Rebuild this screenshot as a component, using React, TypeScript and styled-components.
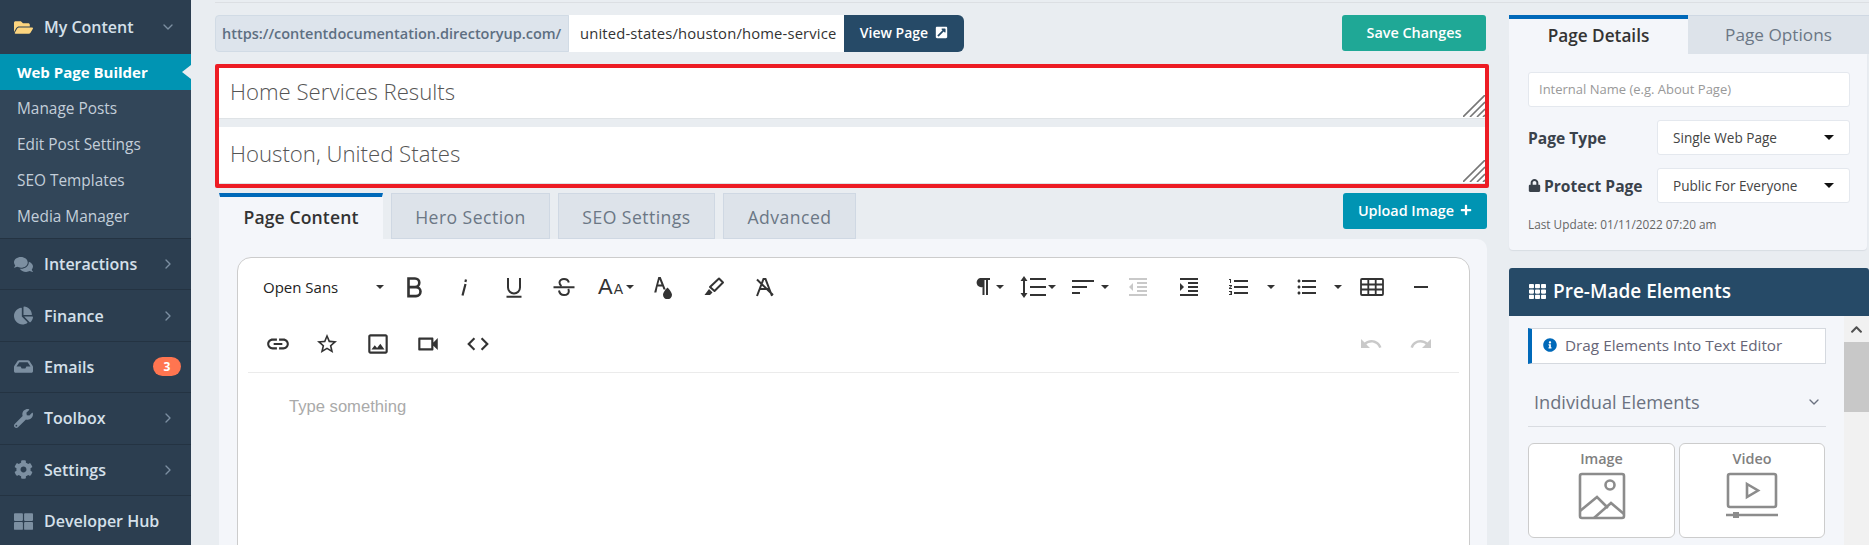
import React from 'react';
import styled, { createGlobalStyle } from 'styled-components';
import {
    FaFolderOpen,
    FaComments,
    FaChartPie,
    FaInbox,
    FaWrench,
    FaCog,
    FaThLarge,
    FaExternalLinkSquareAlt,
    FaPlus,
    FaLock,
    FaTh,
    FaInfoCircle,
    FaChevronUp
} from 'react-icons/fa';
import {
    MdFormatIndentDecrease,
    MdFormatIndentIncrease,
    MdFormatListNumbered,
    MdFormatListBulleted,
    MdRemove,
    MdLink,
    MdStarBorder,
    MdOutlineImage,
    MdOutlineVideocam,
    MdCode,
    MdUndo,
    MdRedo
} from 'react-icons/md';
import { ChevronRight, ChevronDown } from 'lucide-react';

const FONT = `'Open Sans', 'Noto Sans', sans-serif`;

const GlobalStyle = createGlobalStyle`
    html, body {
        margin: 0;
        padding: 0;
        height: 100%;
        overflow: hidden;
        background: #e9edf1;
        font-family: ${FONT};
    }
    * {
        box-sizing: border-box;
    }
`;

const Page = styled.div`
    display: flex;
    height: 545px;
    overflow: hidden;
`;

const Sidebar = styled.nav`
    width: 191px;
    flex: none;
    background: #2c3e50;
    color: #d5e0ea;
`;

const MenuRow = styled.div<{ $first?: boolean }>`
    display: flex;
    align-items: center;
    height: ${p => (p.$first ? '54px' : '51.4px')};
    padding: 0 12px 0 13px;
    border-top: ${p => (p.$first ? '0' : '1px solid #243342')};
    font-size: 16px;
    font-weight: 600;
`;

const MenuIcon = styled.span<{ $yellow?: boolean }>`
    display: flex;
    justify-content: center;
    width: 20px;
    margin-right: 11px;
    font-size: 19px;
    color: ${p => (p.$yellow ? '#fdd57f' : '#7c8fa1')};
`;

const MenuLabel = styled.span`
    flex: 1;
`;

const MenuArrow = styled.span`
    display: flex;
    margin-right: 3px;
    color: #7c8fa1;
`;

const Badge = styled.span`
    width: 28px;
    height: 19px;
    margin-right: -2px;
    border-radius: 10px;
    background: #ff7550;
    color: #fff;
    font-size: 12px;
    font-weight: 700;
    line-height: 19px;
    text-align: center;
`;

const SubMenu = styled.div`
    height: 184px;
    padding-bottom: 4px;
    background: #324659;
`;

const SubItem = styled.div<{ $active?: boolean }>`
    position: relative;
    height: 36px;
    padding-left: 17px;
    background: ${p => (p.$active ? '#0094b3' : 'transparent')};
    color: ${p => (p.$active ? '#fff' : '#c3ced9')};
    font-size: ${p => (p.$active ? '15px' : '15.4px')};
    font-weight: ${p => (p.$active ? 700 : 500)};
    line-height: ${p => (p.$active ? '36px' : '38px')};

    ${p =>
        p.$active &&
        `&:after {
            content: '';
            position: absolute;
            right: 0;
            top: 11px;
            border: 7px solid transparent;
            border-right: 9px solid #e9edf1;
            border-left: 0;
        }`}
`;

const Workspace = styled.div`
    flex: 1;
    min-width: 0;
    margin-left: 24px;
    padding-top: 2px;
`;

const Columns = styled.div`
    display: flex;
    gap: 20px;
    border-top: 1px solid #dcdfe3;
    padding-top: 12px;
`;

const EditorColumn = styled.main`
    width: 1274px;
    flex: none;
`;

const UrlRow = styled.div`
    display: flex;
    align-items: stretch;
    height: 37px;
`;

const UrlPrefix = styled.div`
    display: flex;
    align-items: center;
    width: 354px;
    padding-left: 6px;
    background: #dde4ec;
    border: 1px solid #d1dbe5;
    border-radius: 4px 0 0 4px;
    color: #5d6f82;
    font-size: 14.5px;
    font-weight: 600;
    white-space: nowrap;
`;

const UrlSlug = styled.div`
    width: 275px;
    padding: 0 8px 0 11px;
    background: #fff;
`;

const SlugText = styled.div`
    overflow: hidden;
    color: #333;
    font-size: 14.8px;
    letter-spacing: 0.15px;
    line-height: 36px;
    white-space: nowrap;
`;

const ViewButton = styled.div`
    display: flex;
    align-items: center;
    justify-content: center;
    gap: 7px;
    width: 120px;
    padding-bottom: 2px;
    background: #264a67;
    border-radius: 0 6px 6px 0;
    color: #fff;
    font-size: 14px;
    font-weight: 600;
`;

const ActionButton = styled.div<{ $color: string }>`
    display: flex;
    align-items: center;
    justify-content: center;
    gap: 6px;
    width: 144px;
    height: 36px;
    padding-bottom: 2px;
    background: ${p => p.$color};
    border-radius: 3px;
    color: #fff;
    font-size: 14.4px;
    font-weight: 600;
`;

const SaveSlot = styled.div`
    margin-left: auto;
    margin-right: 3px;
`;

const TitleBox = styled.div`
    display: flex;
    flex-direction: column;
    gap: 8px;
    height: 124px;
    margin-top: 12px;
    border: 4px solid #ed1c24;
    border-radius: 2px;
`;

const TitleField = styled.div<{ $h: number }>`
    position: relative;
    height: ${p => p.$h}px;
    padding-left: 11px;
    background: #fff;
    border-bottom: 1px solid #dfe3e6;
    color: #555;
    font-size: 22.2px;
    font-weight: 300;
    line-height: ${p => p.$h - 4}px;
`;

const Hatch = styled.svg`
    position: absolute;
    right: 0;
    bottom: 1px;
`;

const TabRow = styled.div`
    display: flex;
    align-items: flex-start;
    gap: 8px;
    height: 46px;
    margin-top: 5px;
    padding: 0 2px 0 4px;
`;

const Tab = styled.div<{ $active?: boolean; $w: number }>`
    width: ${p => p.$w}px;
    height: 46px;
    background: ${p => (p.$active ? '#f4f6fa' : '#dde3ea')};
    border: 1px solid ${p => (p.$active ? '#f4f6fa' : '#cfd8e3')};
    border-top: ${p => (p.$active ? '4px solid #0069b9' : '1px solid #cfd8e3')};
    color: ${p => (p.$active ? '#333' : '#6b7785')};
    font-size: 17.6px;
    font-weight: ${p => (p.$active ? 600 : 500)};
    letter-spacing: ${p => (p.$active ? '0.1px' : '0.45px')};
    line-height: ${p => (p.$active ? '40px' : '46px')};
    text-align: center;
`;

const UploadSlot = styled.div`
    margin-left: auto;
`;

const ContentPanel = styled.section`
    margin: 0 2px 0 4px;
    height: 310px;
    padding: 18px 17px 0 18px;
    background: #f4f6fa;
    border-radius: 0 10px 0 0;
`;

const Editor = styled.div`
    height: 300px;
    padding: 1px 10px 0;
    background: #fff;
    border: 1px solid #ccc;
    border-radius: 14px 14px 0 0;
`;

const Toolbar = styled.div`
    display: flex;
    align-items: center;
    height: 57px;
    padding: 0 4px;
    color: #333;
`;

const RowBottom = styled(Toolbar)`
    border-bottom: 1px solid #ebebeb;
    padding-right: 13px;
`;

const RowTop = styled(Toolbar)`
    padding-right: 13px;
    padding-bottom: 2px;
`;

const FontSelect = styled.div`
    display: flex;
    align-items: center;
    justify-content: space-between;
    width: 137px;
    padding: 0 5px 0 11px;
    color: #222;
    font-size: 15px;
`;

const ToolButton = styled.div<{ $w?: number; $pad?: number; $off?: boolean }>`
    display: flex;
    align-items: center;
    width: ${p => p.$w ?? 50}px;
    padding-left: ${p => p.$pad ?? 13}px;
    color: ${p => (p.$off ? '#c9c9c9' : '#333')};
`;

const Caret = styled.span<{ $gap?: number }>`
    width: 0;
    height: 0;
    margin-left: ${p => p.$gap ?? 0}px;
    border: 4px solid transparent;
    border-top: 4px solid #333;
    border-bottom: 0;
`;

const SizeGlyph = styled.span`
    display: flex;
    align-items: baseline;
    width: 26px;
    font-family: 'Liberation Sans', sans-serif;
    font-size: 22px;
    line-height: 1;
    small {
        font-size: 14px;
        margin-left: 1px;
    }
`;

const Spacer = styled.div`
    flex: 1;
`;

const Placeholder = styled.div`
    padding: 24px 0 0 41px;
    color: #aaa;
    font-family: 'Liberation Sans', Arial, sans-serif;
    font-size: 16.6px;
`;

const SideColumn = styled.aside`
    flex: none;
    width: 360px;
`;

const SideTabs = styled.div`
    display: flex;
    height: 39px;
`;

const SideTab = styled.div<{ $active?: boolean }>`
    width: ${p => (p.$active ? '179px' : '181px')};
    background: ${p => (p.$active ? '#f4f6fa' : '#dde3ea')};
    border-top: ${p => (p.$active ? '4px solid #0069b9' : '1px solid #cfd8e3')};
    color: ${p => (p.$active ? '#333' : '#6b7785')};
    font-size: 17.2px;
    font-weight: ${p => (p.$active ? 600 : 500)};
    line-height: ${p => (p.$active ? '34px' : '38px')};
    text-align: center;
`;

const DetailsCard = styled.section`
    height: 196px;
    width: 358px;
    padding: 18px 17px 0 19px;
    background: #f4f6fa;
    border-radius: 0 0 4px 4px;
    box-shadow: 0 1px 1px #d8dde3;
`;

const TextField = styled.div`
    height: 35px;
    padding-left: 10px;
    background: #fff;
    border: 1px solid #e4e8ee;
    border-radius: 3px;
    color: #999;
    font-size: 13px;
    line-height: 33px;
`;

const FieldRow = styled.div`
    display: flex;
    align-items: center;
    justify-content: space-between;
    height: 35px;
    margin-top: 13px;
`;

const FieldLabel = styled.div`
    display: flex;
    align-items: center;
    gap: 3px;
    color: #3a424b;
    font-size: 15.6px;
    font-weight: 700;
`;

const SelectBox = styled.div`
    display: flex;
    align-items: center;
    justify-content: space-between;
    width: 193px;
    height: 35px;
    padding: 0 15px;
    background: #fff;
    border: 1px solid #e4e8ee;
    border-radius: 3px;
    color: #444;
    font-size: 13.6px;
    font-weight: 500;
`;

const SelectCaret = styled.span`
    width: 0;
    height: 0;
    border: 5px solid transparent;
    border-top: 5px solid #111;
    border-bottom: 0;
`;

const LastUpdate = styled.div`
    margin-top: 13px;
    color: #666;
    font-size: 11.8px;
`;

const ElementsHeader = styled.div`
    display: flex;
    align-items: center;
    gap: 7px;
    height: 48px;
    margin-top: 18px;
    padding: 0 0 2px 20px;
    background: #264a67;
    border-radius: 3px 3px 0 0;
    color: #fff;
    font-size: 19px;
    font-weight: 600;
`;

const ElementsBody = styled.div`
    display: flex;
    height: 229px;
    background: #f4f6fa;
`;

const ElementsList = styled.div`
    width: 335px;
    padding: 12px 18px 0 19px;
`;

const Notice = styled.div`
    display: flex;
    align-items: center;
    gap: 8px;
    width: 298px;
    height: 36px;
    padding: 0 0 2px 11px;
    background: #fff;
    border: 1px solid #d5d9df;
    border-left: 4px solid #0069b9;
    color: #667;
    font-size: 15.3px;
    svg {
        color: #0069b9;
    }
`;

const GroupHeader = styled.div`
    display: flex;
    align-items: center;
    justify-content: space-between;
    width: 298px;
    height: 63px;
    padding: 13px 4px 0 6px;
    border-bottom: 1px solid #d9dce1;
    color: #6b7280;
    font-size: 18.2px;
    font-weight: 500;
`;

const ElementGrid = styled.div`
    display: grid;
    grid-template-columns: 147px 146px;
    gap: 4px;
    margin-top: 16px;
`;

const ElementCard = styled.div`
    display: flex;
    flex-direction: column;
    align-items: center;
    height: 95px;
    padding-top: 5px;
    background: #fff;
    border: 1px solid #ccc;
    border-radius: 6px;
    color: #808080;
    font-size: 14.4px;
    font-weight: 600;
`;

const ElementArt = styled.svg`
    margin-top: 4px;
    color: #8c8c8c;
`;

const ScrollTrack = styled.div`
    width: 25px;
    background: #f1f1f1;
    color: #505050;
`;

const ScrollUp = styled.div`
    display: flex;
    justify-content: center;
    align-items: center;
    height: 26px;
`;

const ScrollThumb = styled.div`
    height: 70px;
    background: #c8c8c8;
`;

const HatchMark = () => (
    <Hatch width="22" height="22" viewBox="0 0 22 22">
        <path d="M0 22 22 0M7 22 22 7M14 22 22 14M20 22 22 20" stroke="#777" strokeWidth="1.6" fill="none" />
    </Hatch>
);

// froala toolbar icons, the material set draws these too heavy or not at all
const strokeIcon = (d: string, width = 24, height = 24, sw = 2) => () => (
    <svg width={width} height={height} viewBox={`0 0 ${width} ${height}`} fill="none" stroke="currentColor" strokeWidth={sw}>
        <path d={d} />
    </svg>
);

const BoldIcon = strokeIcon('M6.500 3.500h6.500a4.300 4.300 0 0 1 0 8.600H6.500zM6.500 12.100h7.500a4.500 4.500 0 0 1 0 9H6.500z', 24, 24, 2.600);
const ItalicIcon = strokeIcon('M13.500 9 10.500 20.500M14 4.500 13.400 7', 24, 24, 2.200);
const UnderlineIcon = strokeIcon('M6 3v9.500a6 6 0 0 0 12 0V3M4.500 21.800h15', 24, 24, 2);
const StrikeIcon = strokeIcon(
    'M16.800 7.500C16.300 5.200 14.300 4 12 4 9.500 4 7.500 5.400 7.500 7.500c0 1.400.6 2.600 2 3.500M7 15.500C7.500 18.500 9.500 20 12 20c2.800 0 4.800-1.500 4.800-3.800 0-.8-.2-1.500-.6-2.200M1.500 12.300h21',
    24,
    24,
    2
);

const ParagraphIcon = () => (
    <svg width="18" height="22" viewBox="0 0 18 22" fill="currentColor">
        <path d="M7 2h10v2h-2v15h-2V4h-1.500v15h-2v-8a4.500 4.500 0 0 1-2.500-9z" />
    </svg>
);

const LineHeightIcon = () => (
    <svg width="27" height="24" viewBox="0 0 27 24" fill="currentColor">
        <path d="M4 1 7.500 6H5v12h2.500L4 23 .5 18H3V6H.5zM10 3h16v2H10zM10 11h16v2H10zM10 19h16v2H10z" />
    </svg>
);

const AlignIcon = () => (
    <svg width="24" height="18" viewBox="0 0 24 18" fill="currentColor">
        <path d="M1 2h22v2H1zM1 8h15v2H1zM1 14h8v2H1z" />
    </svg>
);

const FillIcon = () => (
    <svg width="22" height="24" viewBox="0 0 22 24" fill="currentColor">
        <path d="M6.300 2h2.400l5 12.500h-2.200l-1.100-3H5.600l-1.200 6H2.200zm-.1 7.500h3.300L7.500 4.500z" />
        <path d="M15.500 12.500s4.500 4.600 4.500 7.200a4.500 4.500 0 0 1-9 0c0-2.600 4.500-7.200 4.500-7.200z" />
    </svg>
);

const BrushIcon = () => (
    <svg width="24" height="24" viewBox="0 0 24 24" fill="none" stroke="currentColor">
        <path d="M8 12 17 3.500l4 4-8.500 8.500z" strokeWidth="2" strokeLinejoin="round" />
        <path d="M7 14l3.500 3.500L8 20H2.500z" fill="currentColor" stroke="none" />
    </svg>
);

const ClearIcon = () => (
    <svg width="24" height="24" viewBox="0 0 24 24" fill="none" stroke="currentColor" strokeWidth="2">
        <path d="M5 21 11.500 4h2L20 21M8 14h9M5 4.500 21 20" />
    </svg>
);

const TableIcon = () => (
    <svg width="24" height="20" viewBox="0 0 24 20" fill="none" stroke="currentColor" strokeWidth="1.800">
        <rect x="1" y="2" width="22" height="16" rx="1" />
        <path d="M1 7.500h22M1 12.500h22M8.300 2v16M15.700 2v16" />
    </svg>
);

const ImageArt = () => (
    <ElementArt width="48" height="48" viewBox="0 0 48 48" fill="none" stroke="currentColor" strokeWidth="2.600">
        <rect x="2" y="2" width="44" height="44" rx="2" />
        <circle cx="32" cy="13" r="4.500" />
        <path d="M2 39 19 25l11 11M16 46l17-15 13 11" />
    </ElementArt>
);

const VideoArt = () => (
    <ElementArt width="52" height="48" viewBox="0 0 52 48" fill="none" stroke="currentColor" strokeWidth="2.600">
        <rect x="2" y="2" width="48" height="33" rx="2" />
        <path d="M21 12l11 6.500-11 6.500z" />
        <path d="M0 43h52" />
        <rect x="7" y="40" width="6" height="6" fill="currentColor" stroke="none" />
    </ElementArt>
);

const App = () => {
    return (
        <Page>
            <GlobalStyle />
            <Sidebar>
                <MenuRow $first>
                    <MenuIcon $yellow>
                        <FaFolderOpen />
                    </MenuIcon>
                    <MenuLabel>My Content</MenuLabel>
                    <MenuArrow>
                        <ChevronDown size={16} />
                    </MenuArrow>
                </MenuRow>
                <SubMenu>
                    <SubItem $active>Web Page Builder</SubItem>
                    <SubItem>Manage Posts</SubItem>
                    <SubItem>Edit Post Settings</SubItem>
                    <SubItem>SEO Templates</SubItem>
                    <SubItem>Media Manager</SubItem>
                </SubMenu>
                <MenuRow>
                    <MenuIcon>
                        <FaComments />
                    </MenuIcon>
                    <MenuLabel>Interactions</MenuLabel>
                    <MenuArrow>
                        <ChevronRight size={16} />
                    </MenuArrow>
                </MenuRow>
                <MenuRow>
                    <MenuIcon>
                        <FaChartPie />
                    </MenuIcon>
                    <MenuLabel>Finance</MenuLabel>
                    <MenuArrow>
                        <ChevronRight size={16} />
                    </MenuArrow>
                </MenuRow>
                <MenuRow>
                    <MenuIcon>
                        <FaInbox />
                    </MenuIcon>
                    <MenuLabel>Emails</MenuLabel>
                    <Badge>3</Badge>
                </MenuRow>
                <MenuRow>
                    <MenuIcon>
                        <FaWrench />
                    </MenuIcon>
                    <MenuLabel>Toolbox</MenuLabel>
                    <MenuArrow>
                        <ChevronRight size={16} />
                    </MenuArrow>
                </MenuRow>
                <MenuRow>
                    <MenuIcon>
                        <FaCog />
                    </MenuIcon>
                    <MenuLabel>Settings</MenuLabel>
                    <MenuArrow>
                        <ChevronRight size={16} />
                    </MenuArrow>
                </MenuRow>
                <MenuRow>
                    <MenuIcon>
                        <FaThLarge />
                    </MenuIcon>
                    <MenuLabel>Developer Hub</MenuLabel>
                </MenuRow>
            </Sidebar>

            <Workspace>
                <Columns>
                    <EditorColumn>
                        <UrlRow>
                            <UrlPrefix>https://contentdocumentation.directoryup.com/</UrlPrefix>
                            <UrlSlug>
                                <SlugText>united-states/houston/home-services</SlugText>
                            </UrlSlug>
                            <ViewButton>
                                View Page <FaExternalLinkSquareAlt size={13} />
                            </ViewButton>
                            <SaveSlot>
                                <ActionButton $color="#1fa896">Save Changes</ActionButton>
                            </SaveSlot>
                        </UrlRow>

                        <TitleBox>
                            <TitleField $h={51}>
                                Home Services Results
                                <HatchMark />
                            </TitleField>
                            <TitleField $h={57}>
                                Houston, United States
                                <HatchMark />
                            </TitleField>
                        </TitleBox>

                        <TabRow>
                            <Tab $active $w={164}>
                                Page Content
                            </Tab>
                            <Tab $w={159}>Hero Section</Tab>
                            <Tab $w={157}>SEO Settings</Tab>
                            <Tab $w={133}>Advanced</Tab>
                            <UploadSlot>
                                <ActionButton $color="#0094b3">
                                    Upload Image <FaPlus size={12} />
                                </ActionButton>
                            </UploadSlot>
                        </TabRow>

                        <ContentPanel>
                            <Editor>
                                <RowTop>
                                    <FontSelect>
                                        Open Sans <Caret />
                                    </FontSelect>
                                    <ToolButton>
                                        <BoldIcon />
                                    </ToolButton>
                                    <ToolButton>
                                        <ItalicIcon />
                                    </ToolButton>
                                    <ToolButton>
                                        <UnderlineIcon />
                                    </ToolButton>
                                    <ToolButton>
                                        <StrikeIcon />
                                    </ToolButton>
                                    <ToolButton $w={50} $pad={9}>
                                        <SizeGlyph>
                                            A<small>A</small>
                                        </SizeGlyph>
                                        <Caret $gap={2} />
                                    </ToolButton>
                                    <ToolButton>
                                        <FillIcon />
                                    </ToolButton>
                                    <ToolButton>
                                        <BrushIcon />
                                    </ToolButton>
                                    <ToolButton>
                                        <ClearIcon />
                                    </ToolButton>
                                    <Spacer />
                                    <ToolButton $pad={10}>
                                        <ParagraphIcon />
                                        <Caret $gap={5} />
                                    </ToolButton>
                                    <ToolButton $pad={7}>
                                        <LineHeightIcon />
                                        <Caret $gap={1} />
                                    </ToolButton>
                                    <ToolButton $pad={8}>
                                        <AlignIcon />
                                        <Caret $gap={6} />
                                    </ToolButton>
                                    <ToolButton $off $w={51}>
                                        <MdFormatIndentDecrease size={24} />
                                    </ToolButton>
                                    <ToolButton>
                                        <MdFormatIndentIncrease size={24} />
                                    </ToolButton>
                                    <ToolButton $w={70}>
                                        <MdFormatListNumbered size={24} />
                                        <Caret $gap={16} />
                                    </ToolButton>
                                    <ToolButton $w={62} $pad={11}>
                                        <MdFormatListBulleted size={24} />
                                        <Caret $gap={15} />
                                    </ToolButton>
                                    <ToolButton $pad={14}>
                                        <TableIcon />
                                    </ToolButton>
                                    <ToolButton>
                                        <MdRemove size={24} />
                                    </ToolButton>
                                </RowTop>
                                <RowBottom>
                                    <ToolButton>
                                        <MdLink size={26} />
                                    </ToolButton>
                                    <ToolButton>
                                        <MdStarBorder size={24} />
                                    </ToolButton>
                                    <ToolButton>
                                        <MdOutlineImage size={26} />
                                    </ToolButton>
                                    <ToolButton>
                                        <MdOutlineVideocam size={26} />
                                    </ToolButton>
                                    <ToolButton>
                                        <MdCode size={26} />
                                    </ToolButton>
                                    <Spacer />
                                    <ToolButton $off>
                                        <MdUndo size={24} />
                                    </ToolButton>
                                    <ToolButton $off>
                                        <MdRedo size={24} />
                                    </ToolButton>
                                </RowBottom>
                                <Placeholder>Type something</Placeholder>
                            </Editor>
                        </ContentPanel>
                    </EditorColumn>

                    <SideColumn>
                        <SideTabs>
                            <SideTab $active>Page Details</SideTab>
                            <SideTab>Page Options</SideTab>
                        </SideTabs>
                        <DetailsCard>
                            <TextField>Internal Name (e.g. About Page)</TextField>
                            <FieldRow>
                                <FieldLabel>Page Type</FieldLabel>
                                <SelectBox>
                                    Single Web Page <SelectCaret />
                                </SelectBox>
                            </FieldRow>
                            <FieldRow>
                                <FieldLabel>
                                    <FaLock size={13} /> Protect Page
                                </FieldLabel>
                                <SelectBox>
                                    Public For Everyone <SelectCaret />
                                </SelectBox>
                            </FieldRow>
                            <LastUpdate>Last Update: 01/11/2022 07:20 am</LastUpdate>
                        </DetailsCard>

                        <ElementsHeader>
                            <FaTh size={17} /> Pre-Made Elements
                        </ElementsHeader>
                        <ElementsBody>
                            <ElementsList>
                                <Notice>
                                    <FaInfoCircle size={14} /> Drag Elements Into Text Editor
                                </Notice>
                                <GroupHeader>
                                    Individual Elements
                                    <ChevronDown size={16} />
                                </GroupHeader>
                                <ElementGrid>
                                    <ElementCard>
                                        Image
                                        <ImageArt />
                                    </ElementCard>
                                    <ElementCard>
                                        Video
                                        <VideoArt />
                                    </ElementCard>
                                </ElementGrid>
                            </ElementsList>
                            <ScrollTrack>
                                <ScrollUp>
                                    <FaChevronUp size={13} />
                                </ScrollUp>
                                <ScrollThumb />
                            </ScrollTrack>
                        </ElementsBody>
                    </SideColumn>
                </Columns>
            </Workspace>
        </Page>
    );
};

export default App;
